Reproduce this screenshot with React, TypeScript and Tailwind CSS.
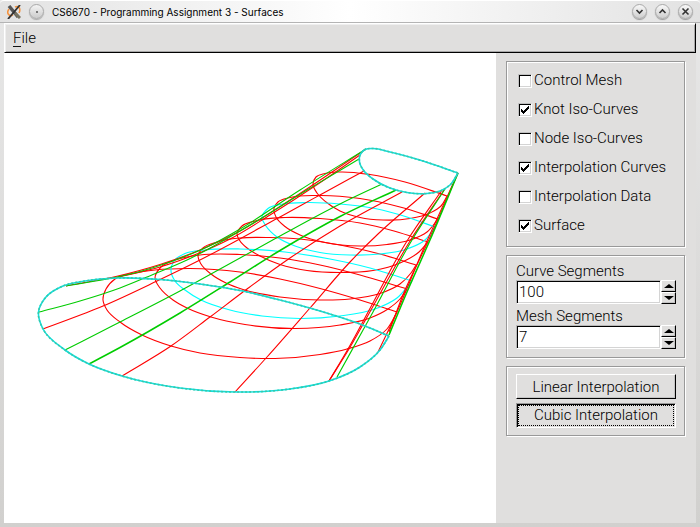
import { useId, useState } from "react";

type Point = [number, number];

const RED = "#ff0000";
const GREEN = "#00cc00";
const CYAN = "#00ffff";

// Smooth path through every point; handles scale with the length of each span.
function spline(points: Point[]): string {
  const dist = (a: Point, b: Point) => Math.hypot(b[0] - a[0], b[1] - a[1]) || 1;
  const dirs = points.map((p, i): Point => {
    const a = points[i - 1];
    const b = points[i + 1];
    if (!a) return [(b[0] - p[0]) / dist(p, b), (b[1] - p[1]) / dist(p, b)];
    if (!b) return [(p[0] - a[0]) / dist(a, p), (p[1] - a[1]) / dist(a, p)];
    const la = dist(a, p);
    const lb = dist(p, b);
    const x = ((p[0] - a[0]) / la) * lb + ((b[0] - p[0]) / lb) * la;
    const y = ((p[1] - a[1]) / la) * lb + ((b[1] - p[1]) / lb) * la;
    const l = Math.hypot(x, y) || 1;
    return [x / l, y / l];
  });
  let d = `M${points[0][0]} ${points[0][1]}`;
  for (let i = 0; i < points.length - 1; i++) {
    const p = points[i];
    const q = points[i + 1];
    const h = dist(p, q) / 3;
    d += `C${p[0] + dirs[i][0] * h} ${p[1] + dirs[i][1] * h} ${q[0] - dirs[i + 1][0] * h} ${q[1] - dirs[i + 1][1] * h} ${q[0]} ${q[1]}`;
  }
  return d;
}

const base: Point[] = [[389, 336], [360, 324], [320, 311], [280, 300], [240, 290.5], [200, 284], [160, 279.5], [118, 278], [85, 281], [63, 286], [46, 297], [38.5, 312], [43, 329], [65, 350], [89, 364], [122, 376], [180, 388], [235, 392], [290, 389], [329, 381], [360, 367], [380, 350], [389, 336]];
const cap: Point[] = [[458, 173], [423, 161], [390, 152], [373, 148.5], [365, 149.5], [360, 155], [359.5, 162], [364, 171], [373, 179], [390, 188], [407, 192.5], [427, 193.5], [440, 191], [450, 185], [458, 173]];

const redSections: Point[][] = [
  [[397, 312], [360, 300], [320, 288.5], [280, 279], [240, 272], [190, 268.5], [155, 270], [135, 273], [115, 279], [106, 289], [103, 300], [107, 310], [120, 322], [142, 335], [171, 346], [200, 353], [240, 357.5], [275, 358.5], [320, 354.5], [347, 349], [370, 341], [387, 329], [397, 312]],
  [[407, 289], [360, 275], [320, 265], [280, 258], [240, 254.5], [200, 255], [175, 260], [161, 267], [155, 278], [160, 288], [173, 300], [187, 308], [211, 317], [245, 324.5], [295, 328.5], [340, 325], [370, 318], [388, 309], [400, 299], [407, 289]],
  [[416, 265], [380, 254], [340, 245], [300, 239], [270, 237.5], [240, 238], [217, 242], [203, 248], [198, 256], [201, 264], [211, 274], [226, 283], [243, 289.5], [280, 297], [320, 300], [350, 299], [380, 293.5], [400, 284], [411, 273], [416, 265]],
  [[428, 242], [394, 231], [360, 223], [320, 218.5], [285, 217.5], [255, 221], [242, 226], [237, 234], [240, 241], [247, 248], [260, 256], [280, 264.5], [307, 270.5], [340, 272.5], [373, 270.5], [400, 263], [419, 252], [428, 242]],
  [[438, 219], [400, 207], [360, 198.5], [320, 195.5], [290, 197.5], [278, 202], [274, 208], [276, 217], [285, 226.5], [300, 235], [325, 242.5], [360, 246], [387, 244.5], [410, 240], [427, 232], [438, 219]],
  [[447, 196], [405, 182], [370, 174.5], [340, 172], [325, 173.5], [316, 177], [313, 184], [317, 193], [326, 202], [340, 211], [360, 217.5], [383, 220], [410, 218.5], [430, 213], [441, 206], [447, 196]],
];

const cyanSections: Point[][] = [
  [[412, 281], [370, 268], [330, 259], [285, 252], [240, 249], [205, 250], [185, 253.5], [174, 261], [171, 271], [175, 281], [185, 290], [201, 300], [230, 310], [262, 316], [300, 318.5], [340, 316], [375, 309], [397, 298], [412, 281]],
  [[435, 227], [407, 217], [375, 208.5], [340, 204], [307, 202.5], [283, 204], [268, 208.5], [262, 217], [266, 226], [277, 237], [295, 246], [320, 252.5], [350, 255], [380, 254], [407, 249], [425, 240], [435, 227]],
];

const redRails: Point[][] = [
  [[66, 286], [118, 276], [160, 264.5], [200, 250], [240, 231], [287, 202], [366, 149]],
  [[118, 277], [160, 267], [198, 253.5], [230, 239], [270, 215], [318, 184], [360, 155]],
  [[43, 329], [103, 306], [157, 281], [198, 261], [278, 218], [318, 196], [364, 171]],
  [[122, 376], [171, 346], [210, 317], [247, 289], [290, 258], [340, 226], [402, 192]],
  [[235, 392], [267, 357], [310, 308], [350, 262], [378, 234], [425, 193]],
  [[329, 381], [348, 349], [374, 301], [407, 241], [442, 190]],
  [[329, 381], [349, 349], [376, 301], [410, 241], [444, 190]],
  [[378, 352], [397, 312], [423, 250], [458, 173]],
  [[389, 332], [405, 290], [426, 246], [458, 173]],
];

const greenRails: Point[][] = [
  [[66, 286], [107, 279], [140, 271.5], [170, 262], [205, 248], [240, 229], [300, 190], [366, 149]],
  [[39, 312], [80, 301], [120, 288], [153, 274.5], [187, 260], [240, 231], [307, 190], [359, 159]],
  [[65, 350], [120, 322], [180, 291], [240, 258], [280, 236], [340, 204], [382, 184]],
  [[337, 377], [373, 312], [412, 240], [445, 189]],
];

const boldRails: Point[][] = [
  [[89, 364], [120, 347.5], [180, 313], [230, 282], [280, 250.5], [340, 216.5], [396, 190]],
  [[389, 335], [407, 292], [430, 240], [458, 173]],
];

function Viewport() {
  return (
    <svg viewBox="4 53 492 470" className="block h-auto w-full" fill="none" strokeWidth="1.1" role="img" aria-label="Surface view">
      {redSections.map((p, i) => <path key={i} d={spline(p)} stroke={RED} />)}
      {cyanSections.map((p, i) => <path key={i} d={spline(p)} stroke={CYAN} strokeWidth="1.2" />)}
      {redRails.map((p, i) => <path key={i} d={spline(p)} stroke={RED} />)}
      {greenRails.map((p, i) => <path key={i} d={spline(p)} stroke={GREEN} />)}
      {boldRails.map((p, i) => <path key={i} d={spline(p)} stroke={GREEN} strokeWidth="1.5" />)}
      {[base, cap].map((p, i) => (
        <g key={i} strokeWidth="1.6">
          <path d={spline(p)} stroke="#10e0e0" />
          <path d={spline(p)} stroke="#38c8a8" strokeDasharray="2 2" />
        </g>
      ))}
    </svg>
  );
}

function Group({ children, className }: { children: React.ReactNode; className: string }) {
  return (
    <div className={`flex flex-col border border-[#999] shadow-[1px_1px_0_#fff,inset_1px_1px_0_#fff] ${className}`}>
      {children}
    </div>
  );
}

function Check({ label, initial = false }: { label: string; initial?: boolean }) {
  const [checked, setChecked] = useState(initial);
  return (
    <label className="flex h-[29px] items-center gap-0.5">
      <span className="grid size-3.5 place-items-center">
        <input
          type="checkbox"
          checked={checked}
          onChange={(e) => setChecked(e.target.checked)}
          className="col-start-1 row-start-1 size-3.5 appearance-none border border-t-[#c0c0c0] border-r-white border-b-white border-l-[#c0c0c0] bg-white shadow-[inset_1px_1px_0_#000,inset_-1px_-1px_0_#d4d4d4]"
        />
        {checked && (
          <svg viewBox="0 0 14 14" className="pointer-events-none col-start-1 row-start-1 size-3.5" fill="#000">
            <path d="M3 6h1v1h1v1h1V7h1V6h1V5h1V4h1V3h1v3h-1v1H9v1H8v1H7v1H6v1H5v-1H4V9H3z" />
          </svg>
        )}
      </span>
      {label}
    </label>
  );
}

const bevel =
  "border border-t-white border-r-black border-b-black border-l-white bg-[#e0dfde] shadow-[inset_-1px_-1px_0_#c4c4c4]";

function Spinner({ label, initial }: { label: string; initial: number }) {
  const id = useId();
  const [value, setValue] = useState(String(initial));
  const step = (n: number) => setValue(String(Number(value) + n));
  return (
    <div className="flex flex-col">
      <label htmlFor={id} className="h-[18px] leading-[18px]">{label}</label>
      <div className="flex h-6">
        <input
          id={id}
          value={value}
          onChange={(e) => setValue(e.target.value)}
          className="min-w-0 flex-1 border border-t-[#b8b8b8] border-r-white border-b-white border-l-[#b8b8b8] bg-white px-0.5 shadow-[inset_1px_1px_0_#000,inset_-1px_-1px_0_#d4d4d4] outline-none"
        />
        <div className="flex w-[15px] flex-col">
          <button aria-label={`Increase ${label}`} onClick={() => step(1)} className={`grid flex-1 place-items-center ${bevel}`}>
            <svg viewBox="0 0 10 4" className="h-1 w-2.5"><path d="M5 0L10 4H0z" /></svg>
          </button>
          <button aria-label={`Decrease ${label}`} onClick={() => step(-1)} className={`grid flex-1 place-items-center ${bevel}`}>
            <svg viewBox="0 0 10 4" className="h-1 w-2.5"><path d="M5 4L10 0H0z" /></svg>
          </button>
        </div>
      </div>
    </div>
  );
}

function TitleButton({ label, d }: { label: string; d: string }) {
  return (
    <button
      aria-label={label}
      className="grid size-[15px] place-items-center rounded-full border border-[#aaa] bg-linear-to-b from-[#f8f8f8] to-[#cfcfcf] shadow-[0_1px_1px_#999]"
    >
      <svg viewBox="0 0 9 9" className="size-[9px]" fill="none" stroke="#333" strokeWidth="1.6"><path d={d} /></svg>
    </button>
  );
}

export default function App() {
  return (
    <div className="flex min-h-screen flex-col bg-linear-to-b from-[#e8e8e8] to-[#d1d0ce] font-[Roboto,'Liberation_Sans',sans-serif] text-[15px] font-light text-black">
      <header className="flex h-[23px] items-center rounded-t border-t border-b border-t-white border-b-[#b4b4b4] bg-linear-to-r from-[#e2e2e2] via-white to-[#e2e2e2] pr-[7px] pl-[7px]">
        <svg viewBox="0 0 14 14" className="size-3.5" fill="none">
          <path d="M2 4C-1 8 2 12 6 10M8 2c4-2 6 2 4 6" stroke="#f5923c" strokeWidth="1.5" />
          <path d="M2 1l9 11" stroke="#555" strokeWidth="3.4" />
          <path d="M13 0L1 14" stroke="#333" strokeWidth="1.8" />
          <path d="M8 8l5 5" stroke="#777260" strokeWidth="3" />
        </svg>
        <button
          aria-label="Window menu"
          className="ml-2 grid size-[15px] place-items-center rounded-full border border-[#aaa] bg-linear-to-b from-[#f4f4f4] to-[#ccc] shadow-[0_1px_1px_#aaa]"
        >
          <span className="size-0.5 rounded-full bg-[#555]" />
        </button>
        <h1 className="ml-2 flex-1 font-[Inter,'Liberation_Sans',sans-serif] text-[10px] leading-4 font-normal">CS6670 - Programming Assignment 3 - Surfaces</h1>
        <div className="flex gap-2">
          <TitleButton label="Minimize" d="M1.5 3l3 3 3-3" />
          <TitleButton label="Maximize" d="M1.5 6l3-3 3 3" />
          <TitleButton label="Close" d="M1.5 1.5l6 6M7.5 1.5l-6 6" />
        </div>
      </header>

      <div className="mx-1 mb-1 flex flex-1 flex-col">
        <nav className="flex h-[30px] items-center border border-t-white border-r-black border-b-black border-l-white bg-[#e0dfde] px-2 shadow-[inset_1px_1px_0_#efefef,inset_-1px_-1px_0_#a8a8a8]">
          <button className="leading-4">
            <span className="inline-block border-b border-[#111]">F</span>ile
          </button>
        </nav>
        <div className="flex flex-1">
          <main className="min-w-0 flex-1 bg-white">
            <Viewport />
          </main>
          <aside className="flex w-[200px] flex-col gap-2 bg-[#e0dfde] py-2 pr-[11px] pl-2.5">
            <Group className="px-[11px] pt-1 pb-1.5">
              <Check label="Control Mesh" />
              <Check label="Knot Iso-Curves" initial />
              <Check label="Node Iso-Curves" />
              <Check label="Interpolation Curves" initial />
              <Check label="Interpolation Data" />
              <Check label="Surface" initial />
            </Group>
            <Group className="gap-[3px] pt-1.5 pr-2 pb-2 pl-[9px]">
              <Spinner label="Curve Segments" initial={100} />
              <Spinner label="Mesh Segments" initial={7} />
            </Group>
            <Group className="gap-1 py-[7px] pr-2 pl-[9px]">
              <button className={`h-[25px] leading-5 ${bevel}`}>Linear Interpolation</button>
              <button className="h-[25px] border border-t-[#999] border-r-white border-b-white border-l-[#999] p-px leading-[19px] shadow-[inset_1px_1px_0_#000]">
                <span className="block border border-dotted border-black">Cubic Interpolation</span>
              </button>
            </Group>
          </aside>
        </div>
      </div>
    </div>
  );
}
